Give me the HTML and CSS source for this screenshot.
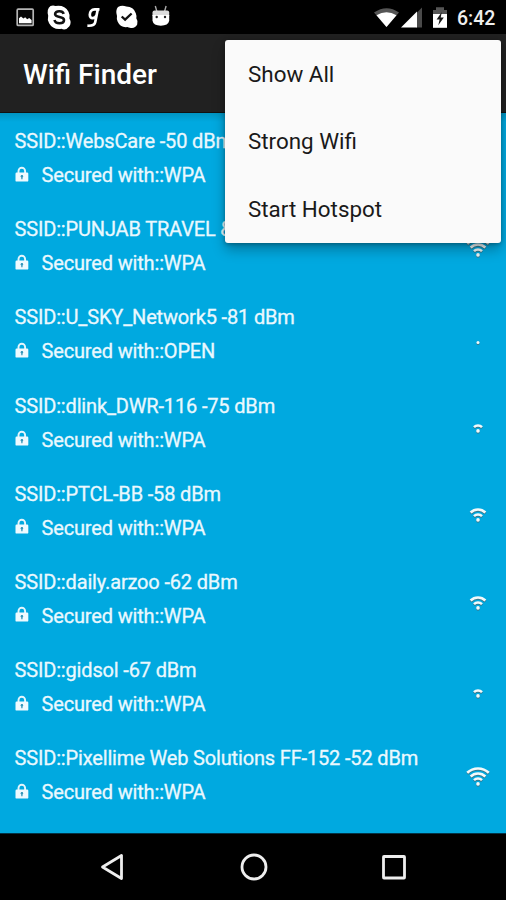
FILE: index.html
```
<!DOCTYPE html>
<html lang="en">
<head>
<meta charset="utf-8">
<title>Wifi Finder</title>
<link rel="stylesheet" href="styles.css">
</head>
<body>
<svg class="defs" width="0" height="0">
  <symbol id="lock" viewBox="0 0 14 17"><path d="M3.5 8V5a3.3 3.3 0 0 1 6.6 0v3" fill="none" stroke="#e4f5fc" stroke-width="1.9"/><rect x=".5" y="6.6" width="12.8" height="9" rx="1.2" fill="#eefaff"/><path d="M6.9 9v4.2" stroke="#3597bb" stroke-width="1.3"/><circle cx="6.9" cy="10.2" r="1.2" fill="#3597bb"/></symbol>
  <symbol id="sig0" viewBox="0 0 26 20"><circle cx="13" cy="16.500" r="1.5"/></symbol>
  <symbol id="sig1" viewBox="0 0 26 20"><circle cx="13" cy="16.900" r="1.800"/><path d="M9 13.200a5.600 5.600 0 0 1 8 0"/></symbol>
  <symbol id="sig2" viewBox="0 0 26 20"><use href="#sig1"/><path d="M5.600 9.500a10.600 10.600 0 0 1 14.800 0"/></symbol>
  <symbol id="sig3" viewBox="0 0 26 20"><use href="#sig2"/><path d="M2.200 5.800a15.600 15.600 0 0 1 21.600 0"/></symbol>
</svg>
<div class="screen">
  <header class="status">
    <div class="notices">
      <svg width="170" height="34" viewBox="0 0 170 34">
        <rect x="17.2" y="9.2" width="16" height="16.2" rx="1" fill="#080808" stroke="#b5b5b5" stroke-width="1.7"/>
        <path d="M19 23.2v-5l2-1.7 2.4 2 1.8-1.2 2 2 2-1.3 2.4 2v3.2z" fill="#fff"/>
        <path d="M50.5 6.1q2.6-1.3 5 0 9-1.4 13 5.6 1.6 3 .9 6.8 2.4 4.2 0 7.8-3.7 4.8-8 2.5-8.500 1.2-12.300-5.600-2-3.600-.9-7.500-1.800-6.500 2.300-9.600z" fill="#fff"/>
        <path d="M63.7 13.900c-.7-2-2.500-2.700-4.500-2.600-2.500.1-4.200 1.200-4.100 3 .2 3.800 8.900 1.700 8.900 5.700 0 2-2 3.200-4.500 3.200-2.400 0-4.500-1-5-3.200" fill="none" stroke="#111" stroke-width="2.600"/>
        <path d="M99.500 9.300h-4.800c-3.300 0-4.900 3-4.900 5.400 0 4.800 5 4.500 7 .2M97.800 9.300l-2.600 13c-.5 2.600-2.500 3.700-7.800 3.400" fill="none" stroke="#fff" stroke-width="2.700"/>
        <path d="M118 7.100q4-2.600 8.300-.5 7.300.2 9.500 6.600 1 2.500.5 5 2 2.700.9 6.300-2 4-6.300 3.400-2.500-.2-3.600-.8-7 .8-9.700-5.600-1.200-2.500-.6-5.400-1.800-5.600 1-9z" fill="#fff"/>
        <path d="m121.700 16.500 3.400 3.200 6.500-6.200" fill="none" stroke="#111" stroke-width="2.300"/>
        <path d="m155.300 6 1.500 5.200m9.300-5.200-1.500 5.200" stroke="#aaa" stroke-width="1.400"/>
        <path d="M152.500 16v-3.500q0-2 2-2h12.700q2 0 2 2V16z" fill="#dcdcdc"/>
        <path d="M152.500 15h16.700v5.800q-1 4.900-8.400 4.900t-8.300-4.900z" fill="#fff"/>
        <circle cx="156.700" cy="17" r="1.200" fill="#222"/><circle cx="165" cy="17" r="1.200" fill="#222"/>
      </svg>
    </div>
    <div class="system">
      <svg width="78" height="34" viewBox="372 0 78 34">
        <path d="M374 12.400q12.700-8.500 25 0L386.400 27z" fill="#555"/>
        <path d="M376.500 15.200q10-6 20 0l-10 11.800z" fill="#fff"/>
        <path d="M422 7.500V27.500h-6V13.500z" fill="#4a4a4a"/>
        <path d="M401 27.500 417 11.500v16z" fill="#fff"/>
        <path d="M433 10h3V7.200h8V10h3v6h-14z" fill="#555"/>
        <path d="M433 14h14v13.800h-14z" fill="#fff"/>
        <path d="m441.800 12-5.200 7.600h3l-1.300 5.700 5.500-7.700h-3.100z" fill="#151515"/>
      </svg>
      <span class="clock">6:42</span>
    </div>
  </header>
  <div class="toolbar"><h1>Wifi Finder</h1></div>
  <ul class="networks">
    <li><p>SSID::WebsCare -50 dBm</p><p class="sec"><svg class="lock"><use href="#lock"/></svg>Secured with::WPA</p><svg class="signal"><use href="#sig3"/></svg></li>
    <li><p>SSID::PUNJAB TRAVEL &amp;</p><p class="sec"><svg class="lock"><use href="#lock"/></svg>Secured with::WPA</p><svg class="signal"><use href="#sig3"/></svg></li>
    <li><p>SSID::U_SKY_Network5 -81 dBm</p><p class="sec"><svg class="lock"><use href="#lock"/></svg>Secured with::OPEN</p><svg class="signal"><use href="#sig0"/></svg></li>
    <li><p>SSID::dlink_DWR-116 -75 dBm</p><p class="sec"><svg class="lock"><use href="#lock"/></svg>Secured with::WPA</p><svg class="signal"><use href="#sig1"/></svg></li>
    <li><p>SSID::PTCL-BB -58 dBm</p><p class="sec"><svg class="lock"><use href="#lock"/></svg>Secured with::WPA</p><svg class="signal"><use href="#sig2"/></svg></li>
    <li><p>SSID::daily.arzoo -62 dBm</p><p class="sec"><svg class="lock"><use href="#lock"/></svg>Secured with::WPA</p><svg class="signal"><use href="#sig2"/></svg></li>
    <li><p>SSID::gidsol -67 dBm</p><p class="sec"><svg class="lock"><use href="#lock"/></svg>Secured with::WPA</p><svg class="signal"><use href="#sig1"/></svg></li>
    <li><p>SSID::Pixellime Web Solutions FF-152 -52 dBm</p><p class="sec"><svg class="lock"><use href="#lock"/></svg>Secured with::WPA</p><svg class="signal"><use href="#sig3"/></svg></li>
  </ul>
  <nav class="navbar">
    <svg width="32" height="32" viewBox="0 0 32 32"><path d="M4.500 16 23.500 4.500v23z"/></svg>
    <svg width="32" height="32" viewBox="0 0 32 32"><circle cx="16" cy="16" r="12"/></svg>
    <svg width="32" height="32" viewBox="0 0 32 32"><rect x="5.500" y="5.500" width="21" height="21.500" rx=".5"/></svg>
  </nav>
  <div class="menu"><div>Show All</div><div>Strong Wifi</div><div>Start Hotspot</div></div>
</div>
</body>
</html>
```
FILE: styles.css
```
* { box-sizing: border-box; margin: 0; padding: 0; }
body { font-family: Roboto, "Liberation Sans", sans-serif; background: #000; }
.defs { position: absolute; }
.screen { position: relative; width: 506px; height: 900px; display: flex; flex-direction: column; overflow: hidden; }
.status { height: 34px; display: flex; justify-content: space-between; background: #000; flex: none; }
.status svg { display: block; }
.system { display: flex; padding-right: 10px; gap: 7px; }
.clock { width: 39px; color: #eee; font-size: 19.500px; font-weight: 500; line-height: 37px; white-space: nowrap; }
.toolbar { height: 79px; flex: none; background: #212121; border-bottom: 1px solid #111; padding-left: 23px; }
.toolbar h1 { color: #fff; font-size: 28px; font-weight: 500; line-height: 82px; }
.networks { height: 720px; flex: none; list-style: none; background: linear-gradient(#0094c2, #00a9e0 9px); }
.networks li { height: 88.150px; padding: 11.200px 15px 0 14.500px; color: #eaf8fe; display: grid; grid-template-columns: 1fr 26px; grid-template-rows: 34px 34px; }
.networks p { font-size: 20px; letter-spacing: -.160px; line-height: 34px; white-space: nowrap; grid-column: 1; -webkit-text-stroke: .3px #eaf8fe; }
.networks .sec { display: flex; align-items: center; }
.lock { width: 14px; height: 17px; margin: -2px 13px 0 0; }
.signal { grid-column: 2; grid-row: 1 / 3; width: 26px; height: 20px; margin-top: 25.800px; fill: none; stroke: #f3f9fa; stroke-width: 2.600px; filter: drop-shadow(0 1px .5px #35798d); }
symbol circle { stroke: none; }
symbol[id^="sig"] circle { fill: #f3f9fa; }
.navbar { flex: 1; display: flex; justify-content: space-between; align-items: center; padding: 0 96px 0 98px; border-top: 1px solid #023447; }
.navbar svg { fill: none; stroke: #eee; stroke-width: 2.800px; stroke-linejoin: round; }
.menu { position: absolute; left: 225px; top: 39.500px; width: 276px; height: 203px; background: #fafafa; border-radius: 3px; box-shadow: 0 7px 13px rgba(0,0,0,.28), 0 1px 4px rgba(0,0,0,.3); padding: 0 0 0 23px; color: #191919; font-size: 22.400px; }
.menu div { height: 67.500px; line-height: 68px; }
```
